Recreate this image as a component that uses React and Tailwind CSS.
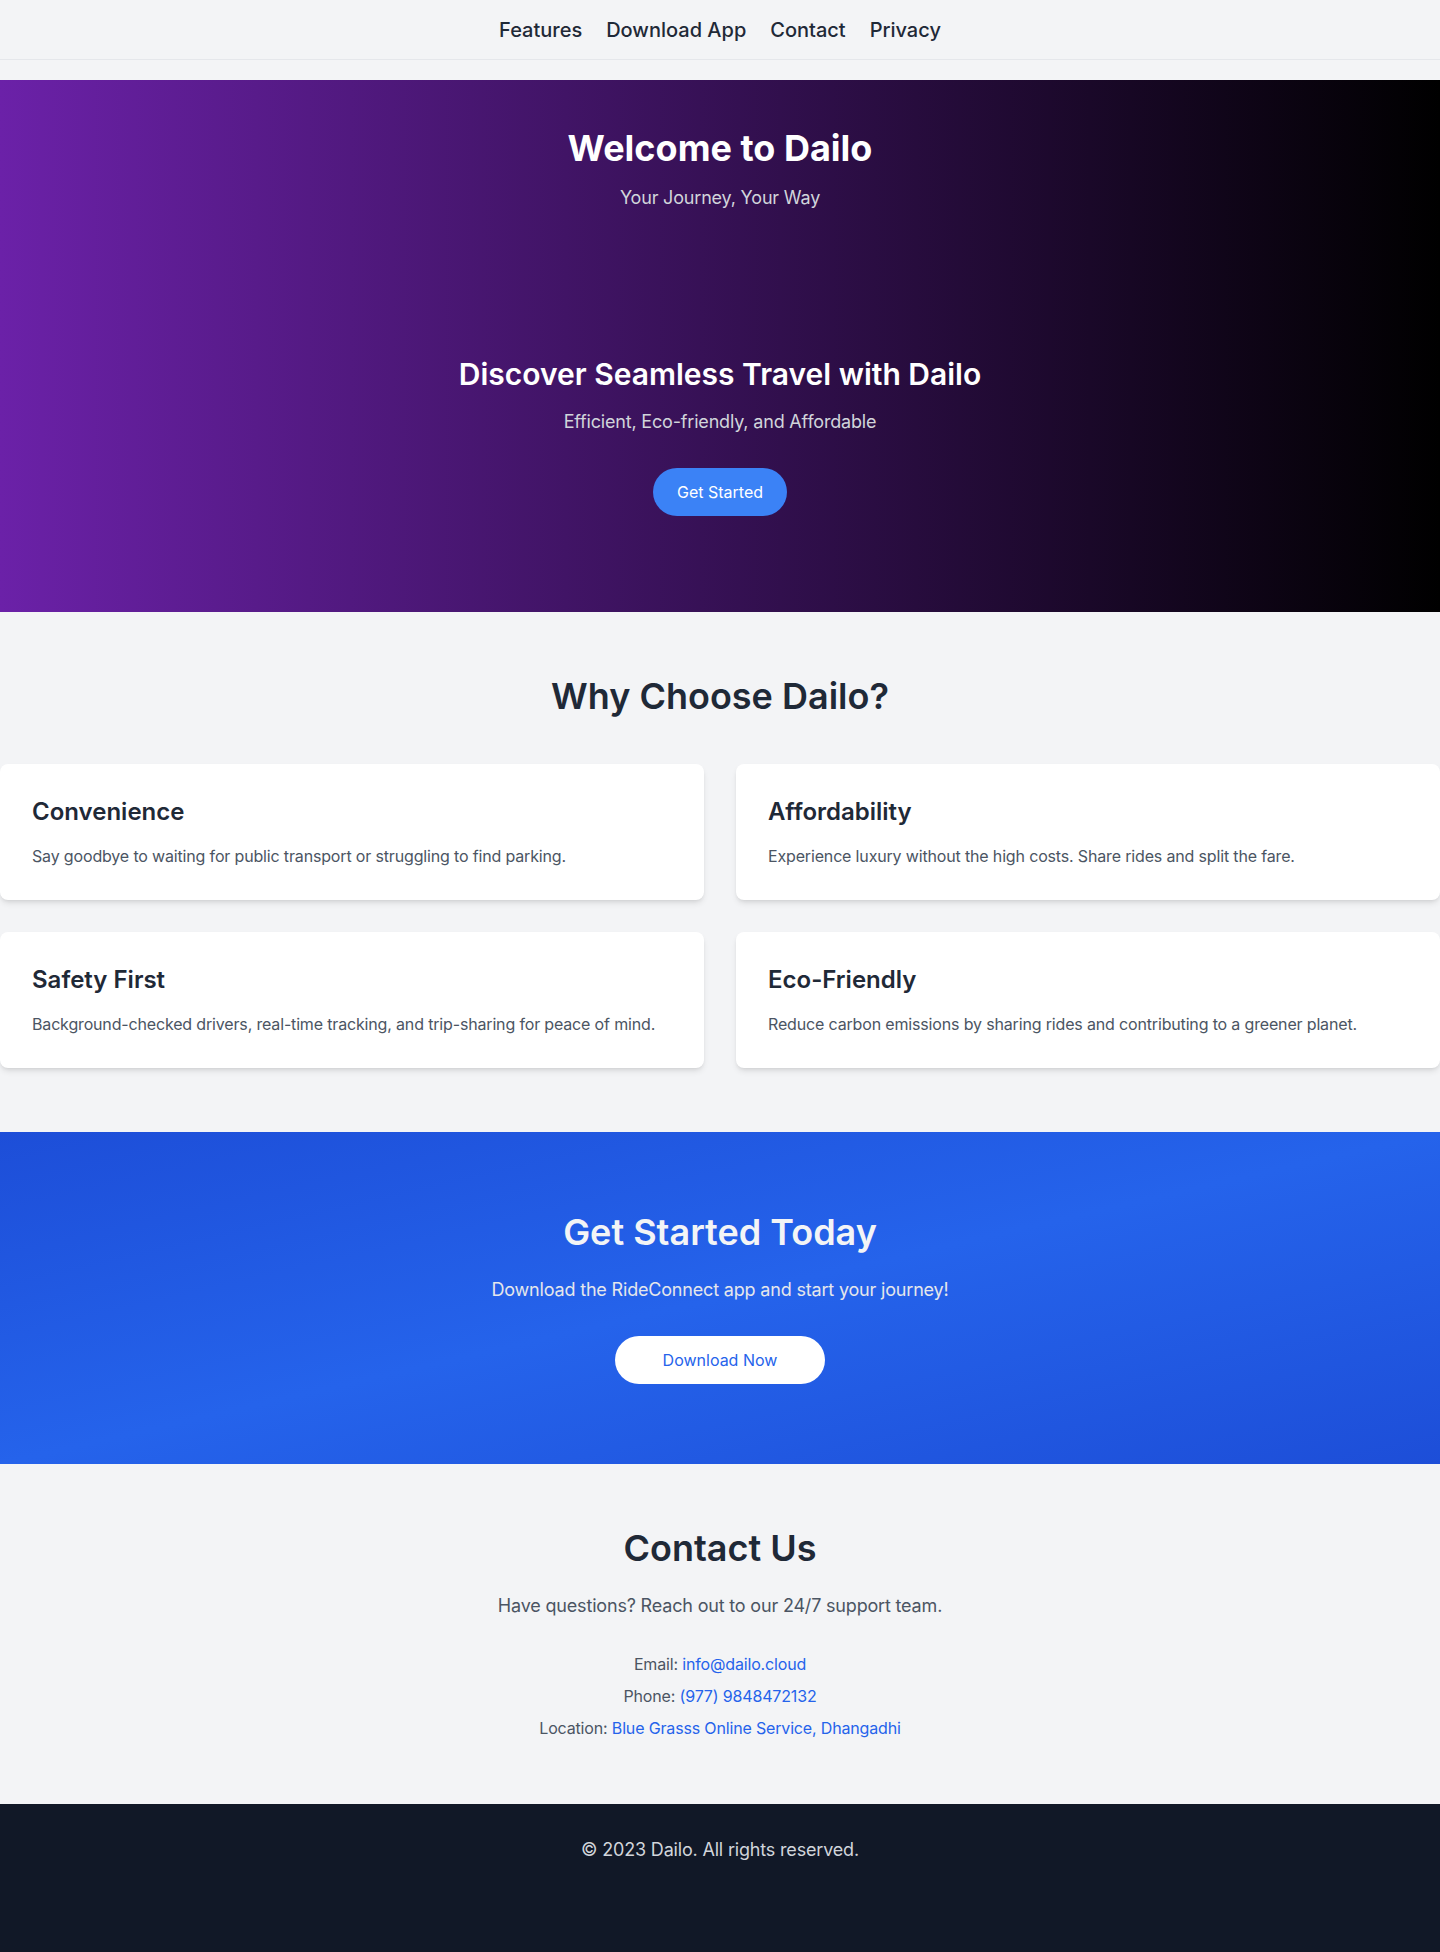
import React from "react";

const NAV = ["Features", "Download App", "Contact", "Privacy"];

const FEATURES = [
  {
    title: "Convenience",
    text: "Say goodbye to waiting for public transport or struggling to find parking.",
  },
  {
    title: "Affordability",
    text: "Experience luxury without the high costs. Share rides and split the fare.",
  },
  {
    title: "Safety First",
    text: "Background-checked drivers, real-time tracking, and trip-sharing for peace of mind.",
  },
  {
    title: "Eco-Friendly",
    text: "Reduce carbon emissions by sharing rides and contributing to a greener planet.",
  },
];

export default function App() {
  return (
    <div className="min-h-screen flex flex-col bg-[#f3f4f6] font-['Inter',sans-serif]">
      {/* Top nav */}
      <nav className="h-[60px] border-b border-[#e5e7eb] flex items-center justify-center gap-6">
        {NAV.map((n) => (
          <a key={n} href="#" className="text-xl font-medium text-[#1f2937]">
            {n}
          </a>
        ))}
      </nav>

      {/* Hero */}
      <section className="mt-5 bg-[linear-gradient(to_right,#6b21a8,#000000)] text-center">
        <header className="py-12">
          <h1 className="text-4xl font-bold text-white">Welcome to Dailo</h1>
          <p className="mt-4 text-lg tracking-[-0.01em] text-[#d1d5db]">Your Journey, Your Way</p>
        </header>
        <div className="py-24">
          <h2 className="text-3xl font-semibold text-white">Discover Seamless Travel with Dailo</h2>
          <p className="mt-4 text-lg tracking-[-0.01em] text-[#d1d5db]">Efficient, Eco-friendly, and Affordable</p>
          <button className="mt-8 px-6 py-3 rounded-full bg-[#3b82f6] text-white text-base">
            Get Started
          </button>
        </div>
      </section>

      {/* Why choose */}
      <section className="py-16">
        <h2 className="text-4xl font-semibold text-[#1f2937] text-center">Why Choose Dailo?</h2>
        <div className="mt-12 grid grid-cols-2 gap-8">
          {FEATURES.map((f) => (
            <div key={f.title} className="bg-white rounded-lg shadow-md p-8">
              <h3 className="text-2xl font-semibold text-[#1f2937]">{f.title}</h3>
              <p className="mt-4 text-base tracking-[-0.01em] text-[#4b5563]">{f.text}</p>
            </div>
          ))}
        </div>
      </section>

      {/* Call to action */}
      <section className="py-20 bg-[linear-gradient(to_bottom_right,#1d4ed8,#2563eb,#1d4ed8)] text-center">
        <h2 className="text-4xl font-semibold text-[#f3f4f6]">Get Started Today</h2>
        <p className="mt-6 text-lg tracking-[-0.01em] text-[#e5e7eb]">Download the RideConnect app and start your journey!</p>
        <button className="mt-8 px-12 py-3 rounded-full bg-white text-[#2563eb] text-base">
          Download Now
        </button>
      </section>

      {/* Contact */}
      <section className="py-16 text-center">
        <h2 className="text-4xl font-semibold text-[#1f2937]">Contact Us</h2>
        <p className="mt-6 text-lg tracking-[-0.01em] text-[#4b5563]">Have questions? Reach out to our 24/7 support team.</p>
        <div className="mt-8 space-y-2 text-base tracking-[-0.01em] text-[#4b5563]">
          <p>
            Email: <a href="#" className="text-[#2563eb]">info@dailo.cloud</a>
          </p>
          <p>
            Phone: <a href="#" className="text-[#2563eb]">(977) 9848472132</a>
          </p>
          <p>
            Location: <a href="#" className="text-[#2563eb]">Blue Grasss Online Service, Dhangadhi</a>
          </p>
        </div>
      </section>

      {/* Footer */}
      <footer className="flex-1 bg-[#111827] py-8 text-center">
        <p className="text-lg tracking-[-0.01em] text-[#d1d5db]">© 2023 Dailo. All rights reserved.</p>
      </footer>
    </div>
  );
}
